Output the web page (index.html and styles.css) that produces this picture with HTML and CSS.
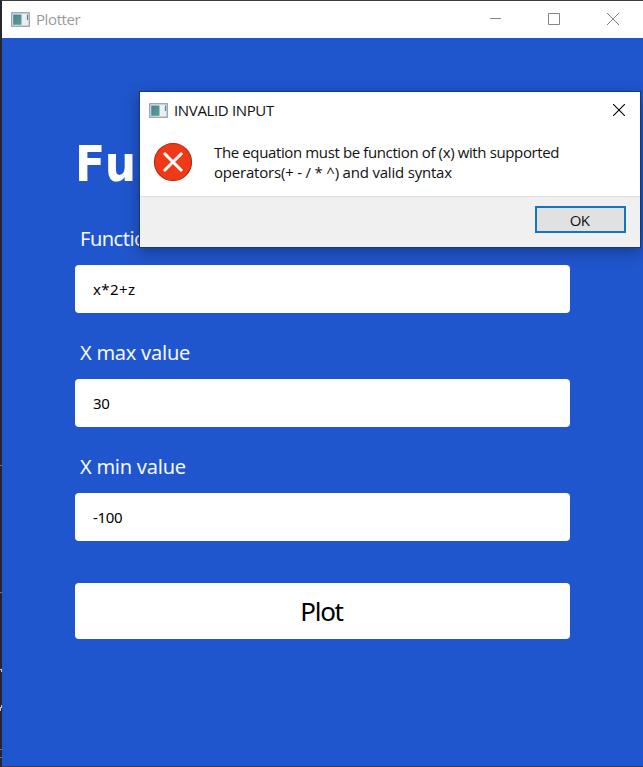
FILE: index.html
```html
<!DOCTYPE html>
<html lang="en">
<head>
<meta charset="utf-8">
<title>Plotter</title>
<link rel="stylesheet" href="styles.css">
</head>
<body>
<svg class="defs" width="0" height="0" aria-hidden="true">
  <defs>
    <linearGradient id="pane" x1="0" y1="0" x2="1" y2="1">
      <stop offset="0" stop-color="#4b7fa0"/>
      <stop offset="1" stop-color="#57a384"/>
    </linearGradient>
    <symbol id="app" viewBox="0 0 19 15">
      <rect x=".75" y=".75" width="17.5" height="13.5" fill="#eceff2" stroke="#8d99a3" stroke-width="1.2"/>
      <rect x="2.2" y="2.5" width="8.3" height="10.3" fill="url(#pane)"/>
      <path d="M16.5 2.5v5.5" stroke="#4f8b88" stroke-width="1.2"/>
    </symbol>
  </defs>
</svg>
<main class="window">
  <header class="titlebar">
    <svg class="app-icon"><use href="#app"/></svg>
    <span class="title">Plotter</span>
    <div class="controls">
      <svg width="12" height="12" viewBox="0 0 12 12"><path d="M1 5.500h11"/></svg>
      <svg width="12" height="12" viewBox="0 0 12 12"><path d="M.5.5h11v11H.5z"/></svg>
      <svg width="12" height="12" viewBox="0 0 12 12"><path d="M0 0l12 12M12 0L0 12"/></svg>
    </div>
  </header>
  <form class="form">
    <h1>Function Plotter</h1>
    <label class="label name">Function</label>
    <div class="field"><span class="equation">x*2+z</span></div>
    <label class="label">X max value</label>
    <div class="field"><span>30</span></div>
    <label class="label">X min value</label>
    <div class="field"><span>-100</span></div>
    <button type="button" class="plot"><span>Plot</span></button>
  </form>
</main>
<svg class="backdrop" width="2" height="767" viewBox="0 0 2 767">
  <path d="M0 465.5h2M0 592.5h2M0 749.5h2M0 757.5h2" stroke="#71767b"/>
  <path d="M0 669.5h2M1.5 669v3M1.5 705v3M.5 707v4" stroke="#c5c7c8"/>
</svg>
<section class="dialog" role="dialog">
  <header class="dialog-title">
    <svg class="app-icon"><use href="#app"/></svg>
    <span class="dialog-name">INVALID INPUT</span>
    <svg class="close" width="12" height="12" viewBox="0 0 12 12"><path d="M0 0l12 12M12 0L0 12"/></svg>
  </header>
  <div class="message">
    <svg width="40" height="40" viewBox="0 0 40 40">
      <circle cx="20" cy="20" r="18.5" fill="#f03a17" stroke="#b32b12" stroke-width="1.2"/>
      <path d="M12 12l16 16M28 12L12 28" stroke="#fff" stroke-width="3" stroke-linecap="square"/>
    </svg>
    <p><span class="line1">The equation must be function of (x) with supported</span><br><span class="line2">operators(+ - / * ^) and valid syntax</span></p>
  </div>
  <footer class="actions"><button type="button" class="ok">OK</button></footer>
</section>
</body>
</html>
```

FILE: styles.css
```css
* { box-sizing: border-box; }
html, body { margin: 0; height: 767px; overflow: hidden; }
body { position: relative; background: #2056cd; font-family: "Noto Sans", "Open Sans", sans-serif; }
.defs { position: absolute; }
svg { flex: none; }
.window { height: 767px; border-left: 2px solid #25272b; border-top: 1px solid #3b3b3d; border-bottom: 1px solid #303c5b; background: #2056cd; }
.titlebar { height: 37px; background: #fff; display: flex; align-items: center; padding-left: 9px; color: #999; }
.app-icon { width: 19px; height: 15px; }
.title { font: 15px/20px "Open Sans", sans-serif; margin: -1px 0 0 6px; letter-spacing: -.4px; }
.controls { margin: -1px 0 0 auto; display: flex; gap: 47px; padding-right: 24px; }
.controls svg { fill: none; stroke: #858585; stroke-width: 1; }
.form { padding: 94px 73px 0 73px; display: flex; flex-direction: column; }
h1 { margin: 0; color: #fff; font: bold 49px/66px "DejaVu Sans Condensed", "DejaVu Sans", sans-serif; letter-spacing: 2px; white-space: nowrap; }
.label { color: #f4f7ff; font-size: 20px; line-height: 28px; padding-left: 5px; margin-top: 26px; height: 28px; letter-spacing: -.25px; }
.name { margin-top: 27px; letter-spacing: -.5px; }
.field { height: 48px; margin-top: 12px; padding-left: 18px; border-radius: 4px; background: #fff; display: flex; align-items: center; font-size: 15px; line-height: 20px; color: #000; letter-spacing: -.3px; }
.equation { letter-spacing: .4px; }
.plot { height: 56px; margin-top: 42px; padding: 0 2px 0 0; border: 0; border-radius: 4px; background: #fff; color: #000; font: 26px/36px "Noto Sans", sans-serif; letter-spacing: -1.3px; }
.backdrop { position: absolute; left: 0; top: 0; fill: none; }
.dialog { position: absolute; left: 139px; top: 91px; width: 502px; height: 157px; border: 1px solid #173879; background: #fff; box-shadow: 0 4px 14px rgba(0,0,0,.32); display: flex; flex-direction: column; font-family: "Open Sans", sans-serif; color: #111; font-size: 15px; }
.dialog-title { height: 36px; display: flex; align-items: center; padding: 0 15px 0 9px; }
.dialog-name { margin-left: 6px; font-size: 15px; letter-spacing: -.35px; }
.close { margin-left: auto; fill: none; stroke: #000; stroke-width: 1.1; }
.message { height: 68px; display: flex; align-items: flex-start; padding: 14px 0 0 13px; }
.message p { margin: 0 0 0 21px; line-height: 20px; white-space: nowrap; }
.line1 { letter-spacing: -.375px; }
.line2 { letter-spacing: -.2px; }
.actions { height: 51px; border-top: 1px solid #dfdfdf; background: #f0f0f0; display: flex; justify-content: flex-end; padding: 9px 14px 0 0; }
.ok { width: 91px; height: 27px; border: 2px solid #0f77c4; background: #e1e1e1; padding: 0 2px 0 0; font: 15px/22px "Open Sans", sans-serif; letter-spacing: -.8px; color: #111; }
```
